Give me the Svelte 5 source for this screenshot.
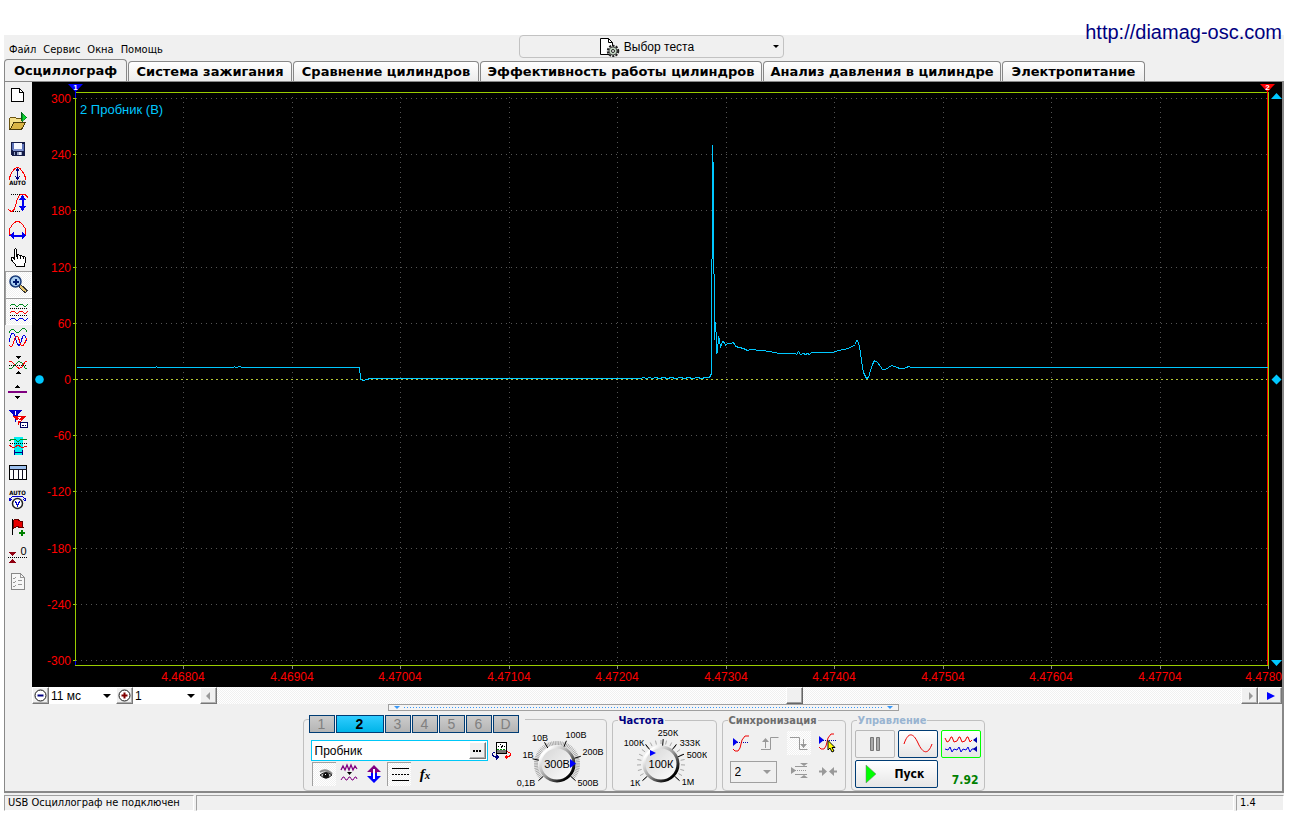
<script>
  const menu = ['Файл', 'Сервис', 'Окна', 'Помощь'];
  const tabs = [
    'Осциллограф',
    'Система зажигания',
    'Сравнение цилиндров',
    'Эффективность работы цилиндров',
    'Анализ давления в цилиндре',
    'Электропитание'
  ];

  const wave = (y, c) =>
    `<path d="M5 ${y}l2-2h2l2 2h2l2-2h2l2 2h2l2-2" fill="none" stroke="${c}"/>`;
  const dots = (x1, x2, y) =>
    `<path d="M${x1} ${y}.5H${x2}" stroke="#000" stroke-dasharray="1 1"/>`;

  const tools = [
    { name: 'Новый', art: '<path d="M6.500 6.500h8l4 4v9h-12z" fill="#fff" stroke="#000"/><path d="M14.500 6.500v4h4" fill="none" stroke="#000"/>' },
    { name: 'Открыть', art: '<path d="M4.500 20v-10.500l1.500-1.500h4l1.500 1.500h6v4" fill="#f5e08a" stroke="#6b5410"/><path d="M5 20.500l4-7h11.500l-4 7z" fill="#d9b445" stroke="#4a3a08"/><path d="M16.500 3v9" stroke="#00601a"/><path d="M17 4l5 4.500-5 4z" fill="#0bd430" stroke="#00701a" stroke-width=".6"/>' },
    { name: 'Сохранить', art: '<path d="M6 6h14v14H7l-1-1z" fill="#151c48"/><path d="M7 7h2v7H7zM17 8h2v7h-2z" fill="#5b71b8"/><path d="M9 7h8v6H9z" fill="#f6f8ff"/><path d="M8 13h10v2H8z" fill="#7f92cc"/><path d="M9 16h8v3H9z" fill="#9aa6c6"/><path d="M10 16h2v3h-2z" fill="#151c48"/><path d="M14 16h2v3h-2z" fill="#e8ecf8"/>' },
    { name: 'Автоматический масштаб', art: '<path d="M4.500 17c0-4 1-5 2-7l3-4 2-1.500h2l2 1.500 3 4c1 2 2 3 2 7" fill="none" stroke="#f00"/><path d="M12.500 6v10M10.500 8.500l2-2.500 2 2.500M10.500 13.500l2 2.500 2-2.500" fill="none" stroke="#000080"/><text x="12.500" y="22" font-size="6" font-weight="bold" text-anchor="middle" font-family="DejaVu Sans Condensed">AUTO</text>' },
    { name: 'Масштаб по вертикали', art: dots(6, 16, 4) + dots(6, 16, 21) + '<path d="M3.500 19.500l2 1.500h2l2-2 1.500-5 1-4 2-4 2-1.500h4l3 3" fill="none" stroke="#f00"/><path d="M17.500 6v14" stroke="#0000f0" stroke-width="2"/><path d="M14 10h7l-3.500-5zM14 16h7l-3.500 5z" fill="#0000f0"/>' },
    { name: 'Масштаб по горизонтали', art: '<path d="M5.500 19l-1-3v-4l3-4.500 3-2.500 2-.500 2 .500 3 2.500 3 4.500v4l-1 3" fill="none" stroke="#f00"/><path d="M6 18.500h14" stroke="#0000f0" stroke-width="2"/><path d="M9 15v7l-4.500-3.500zM17 15v7l4.500-3.500z" fill="#0000f0"/>' },
    { name: 'Рука', art: '<path d="M9.500 15V6l1-1.500 1 1.500v6l1.500-1.500 1.500 1 1.500-.500 1.500 1.500 1.500-.500 1.500 1.500v5l-1.500 2.500v1h-8l-1-2-4-4.500v-2h2z" fill="#fff" stroke="#000"/><path d="M12 11.500v3M15 11.500v3M18 12.500v2" stroke="#000"/>' },
    { name: 'Лупа', on: true, art: '<path d="M14.500 14.500l7 6.500" stroke="#333" stroke-width="4"/><path d="M15 15l6 5.500" stroke="#e8c56a" stroke-width="2"/><circle cx="10.500" cy="10.500" r="5.500" fill="#a9cdf0" stroke="#183a78" stroke-width="1.500" shape-rendering="auto"/><path d="M7.500 10.500h6M10.500 7.500v6" stroke="#001a6e" stroke-width="2"/>' },
    { name: 'Раздельные графики', on: true, art: wave(8, '#008a20') + dots(5, 23, 10) + wave(15, '#f00') + dots(5, 23, 17) + wave(22, '#0000e0') },
    { name: 'Совмещённые графики', art: '<path d="M4 7.500q3-5 6-1.500t6-1t6 1.500" fill="none" stroke="#008a20"/><path d="M4 17c2-11 5-11 6.500-4s4 10 5.500 4 3-11 6-1" fill="none" stroke="#0000e0"/><path d="M4 20c2 2 3 2 4-1s2-8 4-8 3 10 5 10 3-3 5-8" fill="none" stroke="#f00"/>' },
    { name: 'Сжать по нулю', art: '<path d="M10 4h6l-3 3zM10 22h6l-3-3z"/><path d="M4 17l3-1 5-5 2-1.500 3 1.500 3 5 2 1" fill="none" stroke="#008a20"/><path d="M4 9l3 1 5 5 2 1.500 3-1.500 3-5 2-1" fill="none" stroke="#f00"/>' + dots(4, 22, 13) },
    { name: 'Нулевая линия', art: '<path d="M10 9h5l-2.500-3zM10 17h5l-2.500 3z"/><path d="M3 13h19" stroke="#800080" stroke-width="2"/>' },
    { name: 'Маркеры', art: '<path d="M4 4h13l-6.500 8z" fill="#00c"/><path d="M10.500 6v10" stroke="#00c"/><path d="M10 5v4" stroke="#fff"/><path d="M8 10h13l-6.500 7z" fill="#e00"/><path d="M13.500 12v7" stroke="#e00"/><path d="M13 11h3l-3 3h3" stroke="#fff" fill="none"/><path d="M15.500 16.500h7v5h-7z" fill="#fff" stroke="#000060"/><path d="M17 19h2M20 19h1" stroke="#000060"/>' },
    { name: 'Выделение', art: '<path d="M9 4h9v18H9z" fill="#00f0f0"/><path d="M4 8l3-2h3l3 3 3-3h3l3 1" fill="none" stroke="#008a20"/><path d="M4 12l3 2h3l3-2 3 2h3l3-1" fill="none" stroke="#e00"/>' + dots(5, 22, 10) + '<path d="M9.500 17v5M17.500 17v5M10 19.500h7" stroke="#000080"/>' },
    { name: 'Таблица', art: '<path d="M4.500 5.500h17v14h-17z" fill="#fff" stroke="#000"/><path d="M5 6h16v3H5z" fill="#9cc0ee"/><path d="M4.500 9.500h17M8.500 9.500v10M13 9.500v10M17.500 9.500v10" stroke="#101020"/>' },
    { name: 'Автоматический диапазон', art: '<text x="12.500" y="8" font-size="6" font-weight="bold" text-anchor="middle" font-family="DejaVu Sans Condensed">AUTO</text><path d="M5 13c0-3 3-4 7.500-4s7 1 8 4M4 11l1 3 2-2M21 11l-1 3-2-2" fill="none" stroke="#00c"/><circle cx="12.500" cy="16.500" r="5" fill="#fff" stroke="#222" stroke-width="1.500" shape-rendering="auto"/><path d="M10.500 14.500l2 4 2-4" fill="none" stroke="#00c"/>' },
    { name: 'Добавить метку', art: '<path d="M7.500 5v16" stroke="#000"/><path d="M8 7l2-1.500h3l2 1.500h3l-1 3 1 3.500h-3l-3-1-4 2z" fill="#e80000" stroke="#600"/><path d="M16.500 15.500v6M13.500 18.500h6" stroke="#008000" stroke-width="2"/>' },
    { name: 'Установить ноль', art: '<path d="M4 11h7l-3.500 4zM4 22h7l-3.500-4z" fill="#900010"/><text x="18.500" y="14" font-size="11" text-anchor="middle" font-family="Liberation Sans">0</text>' + dots(3, 22, 16) },
    { name: 'Отчёт', art: '<path d="M6.500 5.500h9l4 4v12h-13z" fill="#f7f7f7" stroke="#888"/><path d="M15.500 5.500v4h4M8 10l1 1 2-2M8 14l1 1 2-2M8 18l1 1 2-2M13 12h4M13 16h4" fill="none" stroke="#999"/>' }
  ];

  const gridY = [98, 154, 210, 267, 323, 379, 435, 491, 548, 604, 660];
  const levels = [300, 240, 180, 120, 60, 0, -60, -120, -180, -240, -300];
  const gridX = [183, 292, 400, 509, 617, 726, 834, 943, 1051, 1160, 1268];
  const times = gridX.slice(0, 10).map((_, i) => (4.46804 + i * 0.001).toFixed(5));

  const trace =
    '76,367 155,367 156,366 157,367 233,367 234,366 235,367 240,366 241,367 359,367 359,372 360,373 360,379 363,380 366,379 370,378 ' +
    '640,378 643,377 646,378 649,377 652,378 655,377 659,378 663,377 667,378 671,377 675,378 680,377 684,378 688,377 692,378 697,377 701,378 705,377 709,377 711,373 ' +
    '711,259 712,258 712,145 713,178 713,273 714,274 714,339 715,322 716,340 716,353 717,352 718,336 719,339 720,347 722,341 724,342 725,345 727,343 731,343 732,342 734,343 735,346 739,347 743,348 747,350 ' +
    '750,349 761,350 769,351 779,353 795,353 796,354 798,351 800,354 803,353 805,354 807,353 809,354 811,352 815,352 832,352 838,350 844,349 850,347 855,344 856,340 857,340 859,346 861,360 863,372 866,378 868,377 870,370 872,364 874,360 877,362 880,366 882,369 885,369 888,367 891,365 894,366 897,367 899,368 903,368 906,367 908,366 911,367 1267,367';

  const channels = ['1', '2', '3', '4', '5', '6', 'D'];
  let channel = $state('2');
  let active = $state(0);
  let probe = $state('Пробник');
  let scroll = $state(56.5);

  const tick = (cx, cy, deg, r1, r2) => {
    const a = (deg * Math.PI) / 180;
    const p = (r) => `${(cx + r * Math.cos(a)).toFixed(1)} ${(cy + r * Math.sin(a)).toFixed(1)}`;
    return `M${p(r1)}L${p(r2)}`;
  };
  const ring = (cx, cy, from, to, n, r1, r2) =>
    Array.from({ length: n + 1 }, (_, i) => tick(cx, cy, from + ((to - from) * i) / n, r1, r2)).join('');

  const knobs = {
    range: {
      cx: 44, cy: 36, value: '300В', fine: ring(44, 36, 138, 402, 60, 19, 23),
      main: [138, 192, 240, 292, 342, 402], pointer: 'M57 31v9l6-4.500z',
      labels: [['0,1В', 13, 58], ['1В', 15, 30], ['10В', 27, 13], ['100В', 63, 10], ['200В', 80, 27], ['500В', 75, 58]]
    },
    rate: {
      cx: 46, cy: 36, value: '100К', fine: ring(46, 36, 138, 402, 20, 20, 24),
      main: [138, 232, 275, 308, 337, 402], pointer: 'M35 22v6l6-3z',
      labels: [['1К', 20, 58], ['100К', 19, 18], ['250К', 53, 8], ['333К', 75, 18], ['500К', 82, 30], ['1М', 73, 57]]
    }
  };
</script>

{#snippet knob(k, label)}
  <svg class="knob" viewBox="0 0 92 62" role="img" aria-label={label}>
    <defs>
      <linearGradient id="rim-{k.cx}" x1="0" y1="0" x2="1" y2="1">
        <stop offset=".15" stop-color="#fff" /><stop offset=".5" stop-color="#999" /><stop offset=".85" stop-color="#000" />
      </linearGradient>
      <linearGradient id="face-{k.cx}" x1="0" y1="0" x2="1" y2="1">
        <stop offset="0" stop-color="#d4d4d4" /><stop offset="1" stop-color="#fff" />
      </linearGradient>
    </defs>
    <path d={k.fine} stroke="#a8a8a8" fill="none" />
    <path d={k.main.map((a) => tick(k.cx, k.cy, a, 18, 25)).join('')} stroke="#000" fill="none" />
    <circle cx={k.cx} cy={k.cy} r="17" fill="url(#face-{k.cx})" stroke="url(#rim-{k.cx})" stroke-width="3" />
    <path d={k.pointer} fill="#00f" />
    <text class="value" x={k.cx} y={k.cy + 4}>{k.value}</text>
    {#each k.labels as [t, x, y]}<text class="mark" {x} {y}>{t}</text>{/each}
  </svg>
{/snippet}

<div class="page">
  <a class="site" href="http://diamag-osc.com">http://diamag-osc.com</a>
  <div class="window">
    <header>
      <nav>{#each menu as m}<button>{m}</button>{/each}</nav>
      <button class="test">
        <svg width="22" height="20" viewBox="0 0 22 20" aria-hidden="true">
          <path d="M1.500 1.500h8l4 4v12h-12z" fill="#fff" stroke="#000" /><path d="M9.500 1.500v4h4" fill="none" stroke="#000" />
          <circle cx="14" cy="14" r="5" fill="#dfe8df" stroke="#222" stroke-width="2.500" stroke-dasharray="2 1.200" />
          <circle cx="14" cy="14" r="4" fill="#c2d6c2" stroke="#555" /><circle cx="14" cy="14" r="1.500" fill="#fff" stroke="#222" />
        </svg>
        <span>Выбор теста</span>
        <i class="caret"></i>
      </button>
    </header>

    <div class="tabs" role="tablist">
      {#each tabs as t, i}
        <button role="tab" aria-selected={active === i} class:active={active === i} onclick={() => (active = i)}>{t}</button>
      {/each}
    </div>

    <main>
      <div class="work">
        <div class="tools">
          {#each tools as t}
            <button class:on={t.on} aria-label={t.name}>
              <svg width="27" height="27" viewBox="0 0 27 27" shape-rendering="crispEdges">{@html t.art}</svg>
            </button>
          {/each}
        </div>

        <div class="scope">
          <svg class="plot" viewBox="32 82 1250 605" role="img" aria-label="Осциллограмма">
            <rect x="32" y="82" width="1250" height="605" fill="#000" />
            <g shape-rendering="crispEdges" fill="none">
              <g stroke="#545454" stroke-dasharray="1 4">
                {#each gridY as y}{#if y !== 379}<path d="M76 {y}.5H1267" />{/if}{/each}
                {#each gridX.slice(0, 10) as x}<path d="M{x}.5 97V664" />{/each}
              </g>
              <path d="M76 379.500H1267" stroke="#b4c832" stroke-dasharray="2 3" />
              <path d="M75.500 92V666M75 92.500H1268.500V665.500H75" stroke="#9c0" />
              <path d={gridY.map((y) => `M73 ${y}.5h3`).join('')} stroke="#9c0" />
              <path d={gridX.map((x) => `M${x}.5 666v3`).join('')} stroke="#888" />
              <path d="M75.500 84v14M75.500 661v4" stroke="#00f" />
              <path d="M1267.500 84v581" stroke="#f00" />
            </g>
            <polyline points={trace} transform="translate(.5 .5)" fill="none" stroke="#00c8ff" shape-rendering="crispEdges" />
            <path d="M68 84h15l-7.500 8z" fill="#00f" />
            <path d="M1260 84h15l-7.500 8z" fill="#f00" />
            <text class="flag" x="75.500" y="90">1</text>
            <text class="flag" x="1267.500" y="90">2</text>
            <g fill="#00c8ff">
              <path d="M1271 99h11l-5.500-6zM1271 660h11l-5.500 6zM1271.500 379.500l5-5 5 5-5 5z" />
              <circle cx="39.500" cy="379.500" r="4.300" />
            </g>
            <text class="trace-name" x="80" y="114">2 Пробник (В)</text>
            {#each gridY as y, i}<text class="axis end" x="71" y={y + 5}>{levels[i]}</text>{/each}
            {#each times as t, i}<text class="axis mid" x={gridX[i]} y="681">{t}</text>{/each}
            <text class="axis end" x="1282" y="681">4.4780</text>
          </svg>

          <div class="timebar">
            <button class="raised sq" aria-label="Уменьшить">
              <svg width="15" height="15" viewBox="0 0 15 15"><circle cx="7.500" cy="7.500" r="5.500" fill="#fff" stroke="#111" /><path d="M4.500 7.500h6" stroke="#000080" stroke-width="2" /></svg>
            </button>
            <span class="pick"><select aria-label="Развёртка"><option>11 мс</option></select></span>
            <button class="raised sq" aria-label="Увеличить">
              <svg width="15" height="15" viewBox="0 0 15 15"><circle cx="7.500" cy="7.500" r="5.500" fill="#fff" stroke="#111" /><path d="M4.500 7.500h6M7.500 4.500v6" stroke="#800000" stroke-width="2" /></svg>
            </button>
            <span class="pick"><select aria-label="Множитель"><option>1</option></select></span>
            <button class="raised sq" aria-label="Назад"><svg width="15" height="15" viewBox="0 0 15 15"><path d="M9 4v8L5 8z" fill="#999" /></svg></button>
            <input class="track" type="range" min="0" max="100" step="0.5" bind:value={scroll} aria-label="Позиция" />
            <button class="raised sq" aria-label="Вперёд"><svg width="15" height="15" viewBox="0 0 15 15"><path d="M7 4v8l4-4z" fill="#999" /></svg></button>
            <button class="raised end-btn" aria-label="В конец"><svg width="15" height="15" viewBox="0 0 15 15"><path d="M4 4v8l8-4z" fill="#00f" /></svg></button>
          </div>
        </div>
      </div>

      <div class="splitter"><i></i><b></b><i></i></div>

      <div class="controls">
        <section class="group channel" aria-label="Канал">
          <div class="channel-left">
            <div class="channels">
              {#each channels as c}
                <button class:active={channel === c} onclick={() => (channel = c)}>{c}</button>
              {/each}
            </div>
            <div class="probe">
              <div class="field">
                <input aria-label="Датчик" bind:value={probe} />
                <button class="raised" aria-label="Выбрать датчик"><svg width="9" height="2" viewBox="0 0 9 2"><path d="M0 0h2v2H0zM3 0h2v2H3zM6 0h2v2H6z" /></svg></button>
              </div>
              <button class="plain" aria-label="Инверсия">
                <svg width="20" height="20" viewBox="0 0 20 20" shape-rendering="crispEdges">
                  <path d="M4.500 1.500h10v11h-10z" fill="#fff" stroke="#000" /><path d="M5 9h9v3H5z" fill="#777" /><path d="M5 8.500h9" stroke="#080" stroke-dasharray="2 1" /><path d="M9 7l2-3M6 5h1M12 5h1M8 3h1" stroke="#000" />
                  <path d="M3.500 10.500l-3 2v2l3 1.500h2" fill="none" stroke="#000080" /><path d="M4 13v6l3-3z" fill="#000080" />
                  <path d="M15.500 10.500l3 2v2l-3 1.500h-2" fill="none" stroke="#f00" /><path d="M15 13v6l-3-3z" fill="#f00" />
                </svg>
              </button>
            </div>
            <div class="modes">
              <button class="on" aria-label="Видимость"><svg width="24" height="24" viewBox="0 0 24 24"><path d="M8 10q6-4 12 2" fill="none" stroke="#888" stroke-width="2" /><path d="M8 13q6-5 12 0-6 6-12 0z" fill="#bbb" stroke="#222" /><circle cx="14" cy="13.500" r="3" fill="#111" /><path d="M13 12.500h1" stroke="#fff" /></svg></button>
              <button aria-label="Фильтр"><svg width="24" height="24" viewBox="0 0 24 24"><path d="M4 8l2-4 2 4 2-5 2 5 2-5 2 5 2-4 2 3" fill="none" stroke="#800080" stroke-width="1.300" /><path d="M10 10h5l-2.500 3z" /><path d="M4 18l2-3h1l2 3h1l2-3h1l2 3h1l2-3h1l1 2" fill="none" stroke="#800080" /></svg></button>
              <button aria-label="Сдвиг"><svg width="24" height="24" viewBox="0 0 24 24"><path d="M5 10l7-7 7 7h-4v2H9v-2z" fill="#800080" /><path d="M5 14l7 7 7-7h-4v-3H9v3z" fill="#00f" /><path d="M12 7v10" stroke="#fff" stroke-width="2" /></svg></button>
              <button class="on" aria-label="Линии"><svg width="24" height="24" viewBox="0 0 24 24" shape-rendering="crispEdges"><path d="M5 6.500h17M5 18.500h17" stroke="#000" /><path d="M5 12.500h17" stroke="#000" stroke-dasharray="2 1" /></svg></button>
              <button class="fx" aria-label="Функция"><span>f</span><small>x</small></button>
            </div>
          </div>
          {@render knob(knobs.range, 'Диапазон 300В')}
        </section>

        <fieldset class="group rate">
          <legend class="navy">Частота</legend>
          {@render knob(knobs.rate, 'Частота 100К')}
        </fieldset>

        <fieldset class="group sync">
          <legend>Синхронизация</legend>
          <div class="sync-grid">
            <button aria-label="По уровню"><svg width="24" height="24" viewBox="0 0 24 24"><path d="M4 7v8l5-4z" fill="#00e" /><path d="M8 11.500h12" stroke="#00a" stroke-dasharray="1 1" /><path d="M4 18l2 2h3l2-3 2-8 3-4h4" fill="none" stroke="#e00" /></svg></button>
            <button aria-label="Фронт"><svg width="24" height="24" viewBox="0 0 24 24"><path d="M3 18.500h9.500V6.500h8M7.500 17V8" fill="none" stroke="#999" /><path d="M4 11h7L7.500 7z" fill="#999" /></svg></button>
            <button class="on" aria-label="Спад"><svg width="24" height="24" viewBox="0 0 24 24"><path d="M3 6.500h9.500v12h8M16.500 8v9" fill="none" stroke="#999" /><path d="M13 13h7l-3.500 4z" fill="#999" /></svg></button>
            <button aria-label="Задать уровень"><svg width="24" height="24" viewBox="0 0 24 24"><path d="M3 5v8l5-4z" fill="#00e" /><path d="M7 9.500h14" stroke="#00a" stroke-dasharray="1 1" /><path d="M3 16l2 2h3l2-3 2-8 3-4h3" fill="none" stroke="#e00" /><path d="M12 9.500l7 7h-3l2 3.500-2 1-2-4-2 2z" fill="#ff0" stroke="#000" /></svg></button>
            <span class="pick gray"><select aria-label="Канал синхронизации" disabled><option>2</option></select></span>
            <button aria-label="Гистерезис"><svg width="24" height="24" viewBox="0 0 24 24"><path d="M4 8v7l5-3.500z" fill="#999" /><path d="M8 11.500h11" stroke="#999" stroke-dasharray="1 1" /><path d="M8 7.500h12M8 15.500h12" stroke="#999" /><path d="M13 4h8l-4 3zM13 19h8l-4-3z" fill="#999" /></svg></button>
            <button aria-label="К центру"><svg width="24" height="24" viewBox="0 0 24 24"><path d="M3 12.500h6M15 12.500h6" stroke="#999" stroke-width="2" /><path d="M6 8v9l5-4.500zM18 8v9l-5-4.500z" fill="#999" /></svg></button>
          </div>
        </fieldset>

        <fieldset class="group run">
          <legend class="sky">Управление</legend>
          <div class="run-grid">
            <button class="off" aria-label="Пауза"><svg width="12" height="16" viewBox="0 0 12 16"><path d="M1.500 1.500h3v13h-3zM7.500 1.500h3v13h-3z" fill="#aaa" stroke="#777" /></svg></button>
            <button aria-label="Одиночный"><svg width="30" height="22" viewBox="0 0 30 22"><path d="M1 11C5-1 10-1 15 10s10 12 14 1" fill="none" stroke="#e00" /></svg></button>
            <button class="live" aria-label="Непрерывный"><svg width="34" height="22" viewBox="0 0 34 22"><path d="M1 5l2 4 2-1 2-4 1 0 2 5 3-1 2-4 1 0 2 5 3-1 2-4 1 0 2 5 2-2" fill="none" stroke="#e00" /><path d="M1 16l3 1 2-3 2 5 2-3 3 1 2-3 2 5 2-3 3 1 2-3 2 5 2-3h3" fill="none" stroke="#00d" /><path d="M33 4v6l-4-3zM33 13v6l-4-3z" fill="#00a" /></svg></button>
            <button class="start"><svg width="12" height="20" viewBox="0 0 12 20"><path d="M1 1v18l10-9z" fill="#0f0" stroke="#777" stroke-width=".5" /></svg><span>Пуск</span></button>
            <output>7.92</output>
          </div>
        </fieldset>
      </div>
    </main>

    <footer><span>USB Осциллограф не подключен</span><span></span><span>1.4</span></footer>
  </div>
</div>

<style>
  :global(body) { margin: 0; background: #fff; }
  .page { position: relative; padding: 35px 12px 5px 4px; font: 11px/14px "DejaVu Sans Condensed", sans-serif; color: #000; }
  .page * { box-sizing: border-box; }
  button, input, select { font: inherit; color: inherit; margin: 0; padding: 0; border: 0; background: none; border-radius: 0; outline: 0; }
  svg { display: block; }
  .site { position: absolute; top: 20px; right: 14px; font: 20px/24px "Liberation Sans", sans-serif; color: #000080; text-decoration: none; }
  .window { background: #f0f0f0; }

  header { display: grid; grid-template-columns: minmax(0, 515fr) 265px minmax(0, 500fr); height: 24px; }
  nav { display: flex; gap: 7px; align-items: flex-end; padding: 0 5px 1px; }
  nav button { line-height: 16px; }
  .test { display: flex; align-items: center; justify-content: center; gap: 3px; height: 23px; padding: 0 4px 0 3px; border: 1px solid #c2c2c2; border-radius: 4px; font: 12px/16px "Liberation Sans", sans-serif; }
  .test svg { margin-left: auto; }
  .caret { margin-left: auto; border: 3px solid transparent; border-top-color: #000; border-bottom: 0; }

  .tabs { display: grid; grid-template-columns: 123px 165px 187px 283px 239px 144px; align-items: end; height: 22px; font: bold 13px/18px "DejaVu Sans", sans-serif; }
  .tabs button { height: 20px; margin-left: 1px; white-space: nowrap; border: 1px solid #888; border-bottom: 0; border-radius: 4px 4px 0 0; background: linear-gradient(#fff, #ececec); }
  .tabs .active { height: 22px; margin-left: 0; background: #f0f0f0; }

  main { border: 1px solid #888; border-bottom-width: 2px; border-right-width: 2px; }
  .work { display: grid; grid-template-columns: 27px minmax(0, 1fr); }
  .tools { display: flex; flex-direction: column; }
  .tools button { height: 27px; }
  .on { background: repeating-conic-gradient(#fff 0 25%, #f0f0f0 0 50%) 0 0 / 2px 2px; }
  .tools .on { box-shadow: inset 1px 1px #a0a0a0, inset -1px -1px #fff; }

  .plot { width: 100%; height: auto; }
  .plot text { font-family: "Liberation Sans", sans-serif; }
  .plot .flag { font-size: 8px; font-weight: bold; fill: #fff; text-anchor: middle; }
  .plot .trace-name { font-size: 13px; fill: #00c8ff; }
  .plot .axis { font-size: 12px; fill: #f00; }
  .plot .end { text-anchor: end; }
  .plot .mid { text-anchor: middle; }

  .timebar { display: flex; height: 17px; font: 12px/16px "Liberation Sans", sans-serif; }
  .raised { display: grid; place-items: center; background: #f0f0f0; border: 1px solid; border-color: #fff #777 #777 #fff; box-shadow: inset -1px -1px #b0b0b0; }
  .sq { width: 17px; }
  .end-btn { width: 24px; }
  .pick { position: relative; display: block; width: 67px; background: #fff; }
  .pick select { display: block; width: 100%; height: 100%; padding: 0 2px; appearance: none; opacity: 1; }
  .pick::after { content: ''; position: absolute; right: 5px; top: 7px; border: 4px solid transparent; border-top-color: #000; border-bottom: 0; pointer-events: none; }
  .track { flex: 1; min-width: 0; height: 17px; appearance: none; background: repeating-conic-gradient(#fff 0 25%, #f0f0f0 0 50%) 0 0 / 2px 2px; }
  .track::-webkit-slider-thumb { appearance: none; width: 17px; height: 17px; background: #f0f0f0; border: 1px solid; border-color: #fff #666 #666 #fff; box-shadow: inset -1px -1px #a0a0a0; }

  .splitter { display: flex; align-items: center; gap: 4px; width: 40%; height: 7px; margin: 0 auto; padding: 0 5px; border: 1px solid #a0a0a0; background: #f5f5f5; }
  .splitter i { border: 3px solid transparent; border-top-color: #3898f8; border-bottom: 0; }
  .splitter b { flex: 1; height: 1px; background: repeating-linear-gradient(90deg, #3898f8 0 1px, transparent 1px 3px); }

  .controls { display: flex; justify-content: center; gap: 5px; padding: 8px 0 0; }
  .group { position: relative; height: 72px; margin: 0; border: 1px solid #c0c0c0; border-radius: 4px; padding: 0; min-width: 0; }
  fieldset.group { height: 78px; margin-top: -6px; }
  legend { margin-left: 5px; padding: 1px 1px 0; font: bold 11px/14px "DejaVu Sans Condensed", sans-serif; color: #6d6d6d; }
  .navy { color: #000080; }
  .sky { color: #99b4d1; }
  .channel { display: flex; width: 304px; }
  .channel-left { width: 212px; padding-left: 5px; }
  .channels { display: flex; gap: 1px; width: 216px; margin-top: -5px; background: #f0f0f0; font: 14px/16px "Liberation Sans", sans-serif; }
  .channels button { width: 26px; height: 18px; border: 1px solid #003c74; color: #808080; background: linear-gradient(#ccc, #b4b4b4); }
  .channels .active { width: 48px; color: #000; font-weight: bold; background: linear-gradient(#30ccff, #00b4e8); }
  .probe { display: flex; gap: 4px; margin: 7px 0 0 2px; }
  .field { display: flex; width: 177px; height: 21px; padding: 1px; border: 1px solid #00c8f8; background: #fff; }
  .field input { flex: 1; min-width: 0; padding: 0 2px; font: 12px/16px "Liberation Sans", sans-serif; }
  .field button { width: 17px; }
  .modes { display: flex; gap: 1px; padding-left: 3px; margin-top: 1px; }
  .modes button { width: 24px; height: 24px; }
  .modes .on { box-shadow: inset 1px 1px #a0a0a0; }
  .modes .fx { padding-left: 3px; font: italic bold 15px/18px "Liberation Serif", serif; }
  .fx small { font-size: 11px; }
  .knob { width: 92px; height: 62px; }
  .channel .knob { margin-top: 8px; margin-left: -3px; }
  .knob text { font-family: "Liberation Sans", sans-serif; text-anchor: middle; }
  .knob .value { font-size: 11px; }
  .knob .mark { font-size: 9px; }
  .rate { width: 105px; }
  .rate .knob { margin: 0 0 0 2px; }
  .sync { width: 124px; }
  .sync-grid { display: grid; grid-template-columns: repeat(4, 24px); column-gap: 5px; row-gap: 4px; padding-left: 6px; margin-top: 3px; }
  .sync-grid .pick { grid-column: span 2; width: 47px; height: 22px; margin: 2px 0 0 1px; border: 1px solid #a0a0a0; background: #f0f0f0; font: 12px/16px "Liberation Sans", sans-serif; }
  .gray::after { border-top-color: #999; top: 8px; }
  .gray select { padding-left: 4px; }
  .run { width: 134px; }
  .run-grid { display: grid; grid-template-columns: repeat(3, 40px); gap: 2px 3px; padding-left: 3px; margin-top: 2px; }
  .run-grid button { display: flex; align-items: center; justify-content: center; height: 28px; border: 1px solid #003c74; border-radius: 2px; background: linear-gradient(#fff, #e6e6e6); }
  .run-grid .off { border-color: #b8b8b8; background: #f0f0f0; }
  .run-grid .live { border: 1px solid #0f0; }
  .run-grid .start { grid-column: span 2; justify-content: flex-start; gap: 18px; padding-left: 9px; font: bold 12px/16px "DejaVu Sans Condensed", sans-serif; }
  output { padding: 13px 2px 0 0; text-align: right; font: bold 12px/14px "DejaVu Sans Condensed", sans-serif; color: #008000; }

  footer { display: grid; grid-template-columns: 190px minmax(0, 1fr) 48px; gap: 2px; padding-top: 2px; }
  footer span { height: 16px; padding: 0 3px; white-space: nowrap; border: 1px solid; border-color: #a0a0a0 #fff #fff #a0a0a0; }
</style>
